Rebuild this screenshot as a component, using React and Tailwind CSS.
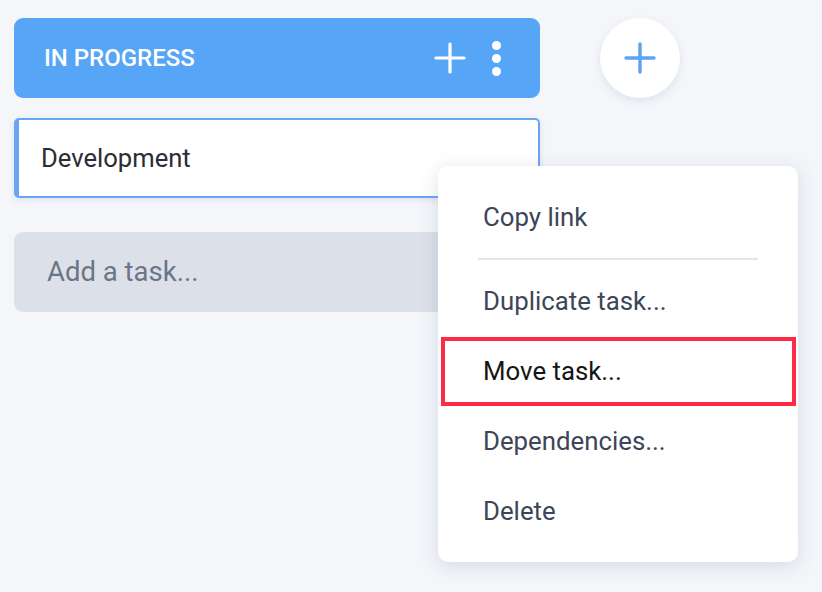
export default function App() {
  const font = { fontFamily: "Roboto, 'Noto Sans', sans-serif" };
  return (
    <div className="relative w-[822px] h-[592px] bg-[#f4f6fa] overflow-hidden" style={font}>
      <div className="flex items-start gap-[60px] pl-[14px] pt-[18px]">
        <div className="flex flex-col w-[526px]">
          <div className="h-[80px] rounded-[9px] bg-[#56a5f7] flex items-center pl-[30px] pr-[39px]">
            <span className="text-white text-[24px] font-medium">IN PROGRESS</span>
            <div className="ml-auto flex items-center gap-[26px]">
              <svg width="32" height="32" viewBox="0 0 32 32">
                <path d="M16 2v28M2 16h28" stroke="white" strokeWidth="3.2" strokeLinecap="round" />
              </svg>
              <div className="flex flex-col gap-[4px]">
                <span className="block w-[9px] h-[9px] rounded-full bg-white" />
                <span className="block w-[9px] h-[9px] rounded-full bg-white" />
                <span className="block w-[9px] h-[9px] rounded-full bg-white" />
              </div>
            </div>
          </div>
          <div className="mt-[20px] h-[80px] bg-white rounded-[5px] border-2 border-l-[5px] border-[#68a6f5] flex items-center pl-[22px] shadow-[0_2px_6px_rgba(60,80,120,0.12)]">
            <span className="text-[25.6px] text-[#2a2d33]">Development</span>
          </div>
          <div className="mt-[34px] h-[80px] bg-[#dce1e9] rounded-[9px] flex items-center pl-[33px]">
            <span className="text-[27.5px] text-[#6a7586]">Add a task...</span>
          </div>
        </div>
        <div className="w-[80px] h-[80px] rounded-full bg-white flex items-center justify-center shadow-[0_3px_8px_rgba(60,80,120,0.12)]">
          <svg width="34" height="34" viewBox="0 0 34 34">
            <path d="M17 3v28M3 17h28" stroke="#5ea2f5" strokeWidth="3.4" strokeLinecap="round" />
          </svg>
        </div>
      </div>

      <div className="absolute left-[438px] top-[166px] w-[360px] h-[396px] bg-white rounded-[10px] shadow-[0_4px_20px_rgba(70,90,140,0.18)] py-[16px] flex flex-col">
        <div className="h-[70px] flex items-center pl-[45px] text-[25.8px] text-[#3c4657]">Copy link</div>
        <div className="mx-[40px] mt-[6px] mb-[7px] h-[2px] bg-[#e4e5e8]" />
        <div className="h-[70px] flex items-center pl-[45px] text-[25.8px] text-[#3c4657]">Duplicate task...</div>
        <div className="h-[70px] mx-[3px] mr-[2px] border-[4px] border-[#ff2a44] flex items-center pl-[38px] text-[25.8px] text-[#151515]">Move task...</div>
        <div className="h-[70px] flex items-center pl-[45px] text-[25.8px] text-[#3c4657]">Dependencies...</div>
        <div className="h-[70px] flex items-center pl-[45px] text-[25.8px] text-[#3c4657]">Delete</div>
      </div>
    </div>
  );
}
